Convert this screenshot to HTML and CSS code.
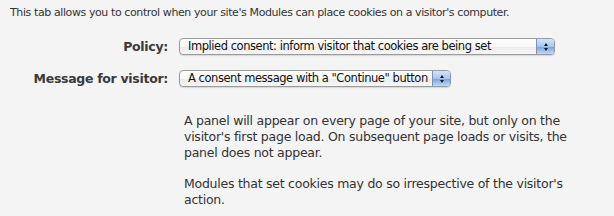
FILE: index.html
```html
<!DOCTYPE html>
<html lang="en">
<head>
    <meta charset="UTF-8">
    <title>Cookie policy</title>
    <link rel="stylesheet" href="styles.css">
</head>
<body>
    <p class="intro">This tab allows you to control when your site's Modules can place cookies on a visitor's computer.</p>

    <div class="form">
        <label class="label">Policy:</label>
        <div class="popup popup-long">
            <span class="popup-text">Implied consent: inform visitor that cookies are being set</span>
            <span class="popup-arrows"><span class="up"></span><span class="down"></span></span>
        </div>

        <label class="label">Message for visitor:</label>
        <div class="popup">
            <span class="popup-text">A consent message with a "Continue" button</span>
            <span class="popup-arrows"><span class="up"></span><span class="down"></span></span>
        </div>

        <div></div>
        <div class="help">
            <p>A panel will appear on every page of your site, but only on the visitor's first page load. On subsequent page loads or visits, the panel does not appear.</p>
            <p>Modules that set cookies may do so irrespective of the visitor's action.</p>
        </div>
    </div>
</body>
</html>
```

FILE: styles.css
```css
body {
    margin: 0;
    padding: 6px 0 0 10px;
    background: #f4f4f4;
    color: #333;
    font-family: "DejaVu Sans", Verdana, sans-serif;
    font-size: 11px;
    letter-spacing: -0.4px;
}

.intro {
    margin: 0;
    line-height: 14px;
}

.form {
    display: grid;
    grid-template-columns: 158px auto;
    column-gap: 11px;
    row-gap: 15px;
    margin-top: 18px;
    align-items: center;
    justify-items: start;
}

.label {
    justify-self: end;
    font-weight: bold;
    font-size: 12.5px;
    letter-spacing: -0.3px;
    color: #3a3a3a;
}

.popup {
    display: flex;
    align-items: stretch;
    height: 15px;
    width: 270px;
    border: 1px solid #9a9a9a;
    border-radius: 4px;
    background: linear-gradient(#ffffff, #f8f8f8 50%, #ececec 55%, #f7f7f7);
    box-shadow: 0 1px 1px rgba(0, 0, 0, 0.12);
    overflow: hidden;
    color: #111;
    font-size: 11.5px;
    letter-spacing: -0.45px;
}

.popup-long {
    width: 374px;
}

.popup-text {
    flex: 1;
    padding-left: 8px;
    line-height: 15px;
    white-space: nowrap;
}

.popup-arrows {
    width: 17px;
    display: flex;
    flex-direction: column;
    align-items: center;
    justify-content: center;
    gap: 2px;
    border-left: 1px solid #7d93b5;
    background: linear-gradient(#d3e4f8, #a6c6ef 50%, #7ca6e2 55%, #bcd8f7);
}

.up, .down {
    width: 0;
    height: 0;
    border-left: 2.5px solid transparent;
    border-right: 2.5px solid transparent;
}

.up {
    border-bottom: 3px solid #1a1a1a;
}

.down {
    border-top: 3px solid #1a1a1a;
}

.help {
    padding: 11px 0 0 5px;
    width: 395px;
    font-size: 12.5px;
    letter-spacing: -0.25px;
    line-height: 16px;
}

.help p {
    margin: 0 0 15px;
}
```
